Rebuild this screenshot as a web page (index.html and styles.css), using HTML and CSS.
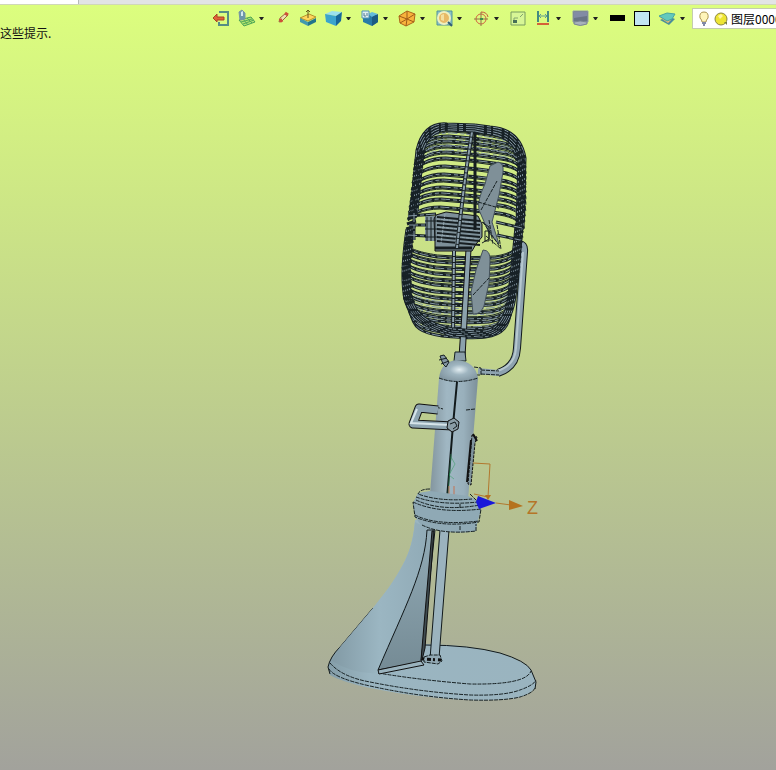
FILE: index.html
```html
<!DOCTYPE html>
<html lang="zh-CN">
<head>
<meta charset="utf-8">
<title>模型视图</title>
<link rel="stylesheet" href="styles.css">
</head>
<body>
<div class="tabs"><div class="tab"></div></div>
<main class="viewport">
  <svg class="scene" viewBox="0 5 776 765" aria-hidden="true">
    <defs>
      <linearGradient id="column"><stop offset="0" stop-color="#83959e"/><stop offset=".35" stop-color="#a0b7c3"/><stop offset=".7" stop-color="#99b0bc"/><stop offset="1" stop-color="#7c8f99"/></linearGradient>
      <radialGradient id="dome" cx=".52" cy=".45" r=".6"><stop offset="0" stop-color="#e3eef2"/><stop offset=".4" stop-color="#9fb5c0"/><stop offset="1" stop-color="#80949f"/></radialGradient>
      <linearGradient id="foot" x1="0" y1="0" x2="1" y2="0"><stop offset="0" stop-color="#849da8"/><stop offset=".2" stop-color="#9ab5c1"/><stop offset="1" stop-color="#9ab4bf"/></linearGradient>
      <linearGradient id="neck"><stop offset="0" stop-color="#829aa5"/><stop offset=".5" stop-color="#9bb6c2"/><stop offset="1" stop-color="#91abb7"/></linearGradient>
      <linearGradient id="panel" x1="0" y1="0" x2="0" y2="1"><stop offset="0" stop-color="#92abb6"/><stop offset="1" stop-color="#758b95"/></linearGradient>
    </defs>

    <!-- base and neck -->
    <path fill="url(#foot)" d="M415 520C413 545 407 558 400 570C391 586 381 598 373 608L340 647Q331 656 328 666L330 675Q342 682 370 688Q419 698 470 700Q504 701 520 697Q537 692 536 682L530 668Q523 661 500 653Q470 645 425 644L435 530L440 520Z"/>
    <path class="line" d="M373 608L340 647Q330 657 328 667L330 674M425 645Q470 645 500 653Q526 661 531 670L536 682L535 689"/>
    <path class="edge" d="M329 669Q334 678 370 686Q420 697 470 700Q504 701 520 697Q533 693 535 688"/>
    <path class="edge" d="M330 663Q342 677 370 682Q420 692 470 695Q504 696 520 690Q534 685 536 680"/>
    <path class="edge" d="M378 673Q420 680 470 684Q526 685 531 671"/>
    <path fill="url(#neck)" d="M415 522C413 545 407 558 400 570C391 586 381 598 373 608L340 647L332 661Q355 675 378 673C400 625 422 585 427 528Z"/>
    <path fill="url(#panel)" stroke="#101719" d="M427 530C425 570 405 607 378 670L421 662L435 530Z"/>
    <path fill="#3f4b50" stroke="#111" d="M432 531L434 531L425 648L422 660L421 660Z"/>
    <path fill="#9ab3be" stroke="#111" d="M378 670L421 661L424 665L379 674Z"/>
    <path fill="#9bb3be" d="M440 529H449L439 659H430Z"/>
    <path class="line" d="M440 530L430 659M449 530L439 658"/>
    <path fill="#91a8b3" class="edge" d="M424 657L430 655H440L442 661L438 664L424 662Z"/>
    <path fill="none" stroke="#111" stroke-width="3" stroke-dasharray="2 3 4 2" d="M422 659L441 660"/>

    <!-- side bracket -->
    <path fill="none" stroke="#11191b" stroke-width="8" stroke-linejoin="round" d="M518 245Q525 243 524 252L517 348Q516 367 498 373"/>
    <path fill="none" stroke="#8da2af" stroke-width="6" stroke-linejoin="round" d="M518 245Q525 243 524 252L517 348Q516 367 498 373L478 371"/>
    <path fill="none" stroke="#b6c8cf" stroke-width="2" d="M523 252L516 348Q515 366 497 371"/>
    <path class="edge" d="M474 367L481 368V375L474 375M481 370L499 371M481 374L499 375"/>

    <!-- cage, blades and motor -->
    <g id="cage-back" class="cage"></g>
    <path fill="#8ba1ac" stroke="#111" d="M466 249H471L465 357H459L463 298Z"/>
    <path fill="#7f9098" stroke="#45525a" d="M498 162Q504 163 503 172L499 195L492 222L499 244L489 233L479 210Q477 200 485 184L490 166Z"/>
    <path fill="#7f9098" stroke="#45525a" d="M483 250Q491 250 490 262L489 283L484 306Q480 315 473 314L471 292L476 270Z"/>
    <path class="edge" d="M481 210L497 181M478 202L499 208M473 295L489 278M483 222L500 247M489 220L493 244M486 236L501 249M497 225L501 249"/>
    <path fill="#7d9099" d="M425 216H438V241H425Z"/>
    <path fill="#7d9099" stroke="#111" d="M436 215L446 212L478 216L482 224V237L476 244L472 251H435V242L434 219Z"/>
    <g id="motor" class="motor"></g>
    <path fill="none" stroke="#161d20" stroke-width="3" d="M475 125L475 230M435 248H472"/>
    <path fill="none" stroke="#161d20" stroke-width="4" d="M454 251L453 336"/>
    <path fill="none" stroke="#8fa3af" stroke-width="2" stroke-dasharray="5 1" d="M454 251L453 336"/>
    <path fill="none" stroke="#1b2427" stroke-width="4" d="M473 126Q464 180 457 248"/>
    <path fill="none" stroke="#8b9fac" stroke-width="2" stroke-dasharray="5 1" d="M473 126Q464 180 457 248"/>
    <g id="cage-front" class="cage"></g>

    <!-- column -->
    <path fill="#8a9faa" stroke="#152022" d="M455 352H465L466 361H454Z"/>
    <path fill="url(#column)" d="M439 378L478 378L468 500L430 494Z"/>
    <path fill="url(#dome)" d="M439 378Q441 362 456 360Q475 361 478 378Q457 385 439 378Z"/>
    <path class="edge" d="M439 378Q457 385 478 378M436 407L443 409M466 410L475 409"/>
    <path class="line" stroke-width="2" d="M457 382L453 425L447 499"/>
    <path fill="#8498a3" stroke="#182023" d="M440 356L444 355L449 362L446 367L443 364ZM439 360L447 358M441 364L449 361"/>
    <path fill="none" stroke="#2d9b5c" opacity=".5" d="M451 454L448 494M451 457L455 464L449 475L454 479"/>
    <path stroke="#c47454" stroke-width="2" opacity=".5" d="M449 486V496M454 486V495"/>

    <!-- handle -->
    <path fill="none" stroke="#111" stroke-width="9" stroke-linejoin="round" d="M438 410L419 408L413 424L453 426"/>
    <path fill="none" stroke="#8da4b0" stroke-width="7" stroke-linejoin="round" d="M438 410L419 408L413 424L453 426"/>
    <path fill="none" stroke="#d6e4e9" stroke-width="2" d="M417 409L411 423L450 425"/>
    <path fill="#8a9da6" stroke="#111" d="M448 421L454 418L459 422L458 429L452 432L447 428Z"/>
    <path class="line" d="M450 424L455 422L457 426L453 429"/>

    <!-- strap and collar -->
    <path fill="#7f939d" stroke="#111" stroke-dasharray="3 1" d="M472 435L477 437L475 443L471 485L468 484Z"/>
    <path fill="none" stroke="#111" stroke-width="2" d="M471 440L467 482M473 434L477 441"/>
    <path fill="#8fa9b5" d="M418 493L413 503L415 517L421 525Q449 536 476 531L477 524L481 510L477 500L468 496L430 491Z"/>
    <path class="edge" d="M430 489Q420 489 418 494Q440 502 472 499M416 497Q441 506 478 502L470 494M416 500Q441 512 480 505M413 502Q439 514 481 509L479 522Q441 528 415 517ZM415 515Q436 526 479 521M422 525Q442 535 476 531V524M460 504V508M460 526V531"/>

    <!-- axes -->
    <path fill="none" stroke="#b2782e" d="M473 463L490 464L488 497L474 494M496 503L511 505"/>
    <path fill="#b5721e" d="M485 495H491L488 500ZM509 500L523 506L509 510Z"/>
    <path fill="#1918d9" d="M478 496L496 503L479 509L476 502Z"/>
    <text class="axis" x="527" y="514">Z</text>
  </svg>

  <div class="toolbar" role="toolbar" aria-label="视图工具">
    <button class="tool" aria-label="退出"><svg viewBox="0 0 25 20"><path fill="none" stroke="#568d84" stroke-width="2" d="M11 5V4H19V17H10V14"/><path fill="#df6338" stroke="#a94324" d="M4 10L8 6V9H15V12H8V14Z"/></svg></button>
    <button class="tool" aria-label="基准面"><svg viewBox="0 0 25 20"><path fill="#b3e46c" stroke="#4aa456" d="M5 12L17 9L21 14L10 18Z"/><path fill="none" stroke="#54aa5b" d="M7 14L18 11M9 16L20 12M9 11L14 17M13 10L18 15"/><path fill="#6b96aa" stroke="#7895a3" d="M5 4L8 2L11 5V11L6 12Z"/><path fill="#d5e8ef" d="M7 4L9 3V8H7Z"/></svg><svg class="caret" viewBox="0 0 5 3"><path d="M0 0H5L3 3H2Z"/></svg></button>
    <button class="tool" aria-label="画笔"><svg viewBox="0 0 25 20"><path fill="#efe1b0" stroke="#9b633f" d="M8 14L9 10L15 5L17 7L11 13Z"/><path stroke="#cf5138" stroke-width="3" d="M9 11L11 14M14 5L17 7"/></svg></button>
    <button class="tool" aria-label="方向"><svg viewBox="0 0 25 20"><path fill="#ffd55c" stroke="#b59329" d="M4 10L13 6L20 9L12 13Z"/><path fill="#4399ae" d="M4 10L12 14V18L4 14Z"/><path fill="#22758c" d="M12 14L20 10V14L12 18Z"/><path fill="none" stroke="#66581c" d="M12 2V10M10 4L12 2L14 4"/></svg></button>
    <button class="tool" aria-label="着色"><svg viewBox="0 0 25 20"><path fill="#9ce1ed" d="M4 6L11 3L21 4L15 8Z"/><path fill="#3ba4cd" d="M4 6L15 8V18L5 14Z"/><path fill="#16679b" d="M15 8L21 4L20 13L15 18Z"/></svg><svg class="caret" viewBox="0 0 5 3"><path d="M0 0H5L3 3H2Z"/></svg></button>
    <button class="tool" aria-label="视角"><svg viewBox="0 0 25 20"><path fill="#287ca7" d="M5 7L20 7V14L14 18L5 14Z"/><path fill="#63bddb" d="M10 6L14 4L20 6L14 9Z"/><path fill="#1b5c83" d="M14 9L20 6V14L14 18Z"/><path fill="#e3f0f2" stroke="#5193b7" d="M4 3H11V10H4Z"/><path fill="none" stroke="#517b91" d="M6 5V8H8M9 5V8"/></svg><svg class="caret" viewBox="0 0 5 3"><path d="M0 0H5L3 3H2Z"/></svg></button>
    <button class="tool" aria-label="线框"><svg viewBox="0 0 25 20"><path fill="#f8b33c" stroke="#ae671b" d="M4 8L12 3L20 6L19 14L11 18L5 15Z"/><path fill="none" stroke="#9f5c18" d="M4 8L12 11L20 6M12 3V11L11 18M5 15L12 11L19 14"/></svg><svg class="caret" viewBox="0 0 5 3"><path d="M0 0H5L3 3H2Z"/></svg></button>
    <button class="tool" aria-label="缩放"><svg viewBox="0 0 25 20"><path fill="#8cc3c4" stroke="#52919c" d="M5 3H20V17H5Z"/><circle cx="12" cy="10" r="6" fill="#e8ba66" stroke="#eef0bf" stroke-width="2"/><path fill="#f3e09f" d="M9 7L12 6V13L9 12Z"/><path stroke="#315e75" stroke-width="2" d="M16 14L20 18"/></svg><svg class="caret" viewBox="0 0 5 3"><path d="M0 0H5L3 3H2Z"/></svg></button>
    <button class="tool" aria-label="旋转"><svg viewBox="0 0 25 20"><circle cx="12" cy="11" r="5" fill="none" stroke="#d46242"/><path fill="none" stroke="#91734a" d="M5 11H19M12 4V18"/><path fill="none" stroke="#c7583d" d="M12 4Q18 4 19 9"/><path fill="#3d8e4c" d="M11 10H14V12H11Z"/></svg><svg class="caret" viewBox="0 0 5 3"><path d="M0 0H5L3 3H2Z"/></svg></button>
    <button class="tool" aria-label="窗口"><svg viewBox="0 0 25 20"><path fill="#d7f696" stroke="#789c61" d="M5 4H19V17H5Z"/><path fill="#476f57" d="M7 12H11V15H7Z"/><path fill="none" stroke="#83a66e" d="M8 12V10H12M14 9L17 6"/></svg></button>
    <button class="tool" aria-label="测量"><svg viewBox="0 0 25 20"><path fill="none" stroke="#448b80" stroke-width="2" d="M7 3V14M17 3V14"/><path fill="none" stroke="#5c9b92" d="M8 8H16M10 6L8 8L10 10M14 6L16 8L14 10"/><path stroke="#d56238" stroke-width="2" d="M6 16H18"/></svg><svg class="caret" viewBox="0 0 5 3"><path d="M0 0H5L3 3H2Z"/></svg></button>
    <button class="tool" aria-label="显示"><svg viewBox="0 0 25 20"><path fill="#697486" stroke="#959fa8" d="M5 3H20V14H5Z"/><path fill="#828ba5" d="M6 4H19V8L6 10Z"/><path fill="#a7b1bb" stroke="#798591" d="M6 14Q12 12 19 14V16Q12 19 6 16Z"/></svg><svg class="caret" viewBox="0 0 5 3"><path d="M0 0H5L3 3H2Z"/></svg></button>
    <button class="tool" aria-label="线条颜色"><svg viewBox="0 0 25 20"><path d="M5 7H20V13H5Z"/></svg></button>
    <button class="tool" aria-label="面颜色"><svg viewBox="0 0 25 20"><path d="M4 3H20V18H4Z"/><path fill="#c1e5f2" d="M5 4H19V17H5Z"/></svg></button>
    <button class="tool" aria-label="图层管理"><svg viewBox="0 0 25 20"><path fill="#4b8d9b" d="M5 12L13 8L20 11L14 17Z"/><path fill="#edbc70" d="M4 9L13 15L16 12L8 8Z"/><path fill="#63c9bd" stroke="#46a6a1" d="M4 8L12 5L20 6L17 11L12 13Z"/></svg><svg class="caret" viewBox="0 0 5 3"><path d="M0 0H5L3 3H2Z"/></svg></button>
    <label class="layer">
      <svg class="layer-icons" viewBox="0 0 36 20" aria-hidden="true"><path fill="#fff5ba" stroke="#ac9550" d="M9 13Q9 11 7 9Q6 3 11 3Q16 3 15 9Q13 11 13 13Z"/><path stroke="#8189a7" stroke-width="2" d="M9 14H13M10 16H12"/><circle cx="28" cy="10" r="6" fill="#ede533" stroke="#8d8640"/><path fill="#fff6a0" d="M25 7L28 5L30 7L27 10Z"/><path fill="#777d3b" d="M31 13H34V16Z"/></svg>
      <select class="layer-name" aria-label="图层"><option>图层0000</option></select>
    </label>
  </div>
  <p class="prompt">这些提示.</p>
</main>
<script src="scene.js"></script>
</body>
</html>
```

FILE: styles.css
```css
* { box-sizing: border-box; }

body {
  margin: 0;
  min-height: 100vh;
  display: flex;
  flex-direction: column;
  font-family: "Noto Sans CJK SC", "Noto Sans", sans-serif;
  font-size: 12px;
  color: #111;
}

.tabs {
  display: flex;
  height: 5px;
  background: #e2e4e5;
  border-bottom: 1px solid #d0d7b8;
}

.tab {
  width: 10%;
  min-width: 79px;
  background: #fff;
  border-right: 1px solid #b6b9ba;
}

.viewport {
  position: relative;
  flex: 1;
  overflow: hidden;
  background: linear-gradient(#dcfe7e, #a2a29c);
}

.scene {
  position: absolute;
  inset: 0;
  width: 100%;
  height: 100%;
}

.toolbar {
  position: relative;
  display: flex;
  justify-content: flex-end;
  height: 22px;
  padding-top: 3px;
}

.tool {
  display: flex;
  flex: none;
  align-items: center;
  height: 20px;
  padding: 0;
  border: 0;
  background: none;
}

.tool svg { width: 25px; height: 20px; }

.tool .caret {
  width: 5px;
  height: 3px;
  margin-right: 7px;
  fill: #222;
}

.layer {
  display: flex;
  flex: none;
  width: 84px;
  height: 21px;
  overflow: hidden;
  background: #fff;
  border: 1px solid #c4ccb0;
  border-right: 0;
}

.layer-icons { flex: none; width: 36px; height: 20px; }

.layer-name {
  flex: none;
  width: 64px;
  height: 18px;
  padding: 0 0 0 2px;
  border: 0;
  appearance: none;
  background: none;
  font: inherit;
  color: #000;
}

.prompt {
  position: relative;
  margin: 0;
  line-height: 12px;
}

.line { fill: none; stroke: #11191b; }
.edge { stroke: #172123; stroke-dasharray: 4 1; }
.edge:not([fill]) { fill: none; }
.cage { fill: none; }
.cage .wire { stroke: #172126; stroke-width: 3; }
.cage .thin { stroke: #172126; stroke-width: 1; }
.cage .shine { stroke: #8497a3; stroke-width: 1; stroke-dasharray: 9 3 4 2; }
.motor { fill: none; stroke: #171e21; stroke-width: 1; }
.motor .wire { stroke-width: 2; }
.motor .shine { stroke: #93a6b0; stroke-dasharray: 3 1; }

.axis {
  font-family: "Liberation Sans", sans-serif;
  font-size: 18px;
  fill: #b57527;
}
```

FILE: scene.js
```js
// Outline of the cage: [y, left x, right x]
const outline = [
  [124, 436, 500], [132, 428, 513], [145, 419, 521], [165, 415, 525],
  [200, 411, 525], [235, 406, 522], [265, 403, 519], [295, 404, 515],
  [315, 413, 510], [330, 431, 500], [338, 452, 484]
];

function sides(y) {
  const at = Math.max(124, Math.min(338, y));
  const i = Math.max(1, outline.findIndex(row => row[0] >= at));
  const a = outline[i - 1];
  const b = outline[i];
  const t = (at - a[0]) / (b[0] - a[0]);
  return [a[1] + (b[1] - a[1]) * t, a[2] + (b[2] - a[2]) * t];
}

function addPath(group, name, d) {
  const path = document.createElementNS("http://www.w3.org/2000/svg", "path");
  path.setAttribute("class", name);
  path.setAttribute("d", d);
  group.append(path);
}

function wire(group, d) {
  addPath(group, "wire", d);
  addPath(group, "shine", d);
}

// Upper wires bow upwards, lower wires bow downwards.
function upper(y, drop) {
  const [l, r] = sides(y + drop);
  return `M${l} ${y + drop}C${l + 3} ${y + 7} ${l + 14} ${y} ${l + 32} ${y}Q${l + 62} ${y + 2} ${r - 24} ${y + 6}C${r - 10} ${y + 8} ${r - 1} ${y + 14} ${r} ${y + drop + 9}`;
}

function lower(y, rise) {
  const [l, r] = sides(y - rise);
  return `M${l} ${y - rise}C${l + 2} ${y - 6} ${l + 12} ${y - 2} ${l + 32} ${y + 1}Q${l + 62} ${y + 4} ${r - 26} ${y + 2}C${r - 10} ${y} ${r - 1} ${y - 7} ${r} ${y - rise - 6}`;
}

const back = document.getElementById("cage-back");
const front = document.getElementById("cage-front");

const upperRows = [125, 130, 136, 141, 146, 152, 158, 166, 174, 180, 187, 193, 199, 207];
const lowerRows = [335, 331, 326, 320, 316, 310, 303, 297, 291, 284, 279, 273, 267, 261, 256];

upperRows.forEach((y, i) => {
  wire(back, upper(y, 22 - i * 0.7));
  addPath(back, "thin", upper(y + 2, 12));
});
lowerRows.forEach((y, i) => {
  wire(back, lower(y, 26 - i));
  addPath(back, "thin", lower(y - 2, 12));
});
// The far half of the cage shows as fine lines between the near wires.
[128, 133, 139, 145, 150].forEach(y => addPath(back, "shine", upper(y, 16)));
[330, 324, 318, 312, 306, 300].forEach(y => addPath(back, "shine", lower(y, 18)));

// Bundled wires down both sides of the cage.
for (let i = 0; i < 4; i++) {
  const n = i * 2;
  wire(front, `M${475} ${125 + n}L${447 + n} ${124 + n}Q${424 + n} ${122 + n} ${417 + n} 150L${411 + n} 211`);
  wire(front, `M${407 + n} 229Q${400 + n} 277 ${405 + n} 297Q${410 + n} 324 ${453 + n} ${336 - n}`);
  wire(front, `M${475} ${125 + n}L${490 - n} ${127 + n}Q${520 - n} ${129 + n} ${525 - n} 158L${523 - n} 228`);
  wire(front, `M${522 - n} 227L${515 - n} 297Q${509 - n} 335 ${482 - n} ${337 - n}L453 ${335 - n}`);
}

for (let y = 151; y < 305; y += 5) {
  const [l, r] = sides(y);
  addPath(front, "wire", `M${l - 1} ${y + 3}L${l + 8} ${y}M${r - 8} ${y + 4}L${r + 1} ${y}`);
}
wire(front, "M408 216L436 214M409 225L426 225M408 235L426 236M414 213V240M496 222L522 228M497 235L520 240");

const motor = document.getElementById("motor");
for (let i = 0; i < 7; i++) {
  addPath(motor, "wire", `M437 ${217 + i * 4}L480 ${221 + i * 4}`);
}
for (let i = 0; i < 3; i++) {
  addPath(motor, "hub", `M${427 + i * 4} 217V241M425 ${221 + i * 8}H438`);
}
addPath(motor, "shine", "M437 219L478 223M438 227L479 231M438 235L478 239M445 214L441 243M460 214L455 247");
addPath(motor, "hub", "M482 222L489 227V239L482 243M485 231H489V241H485Z");
```
